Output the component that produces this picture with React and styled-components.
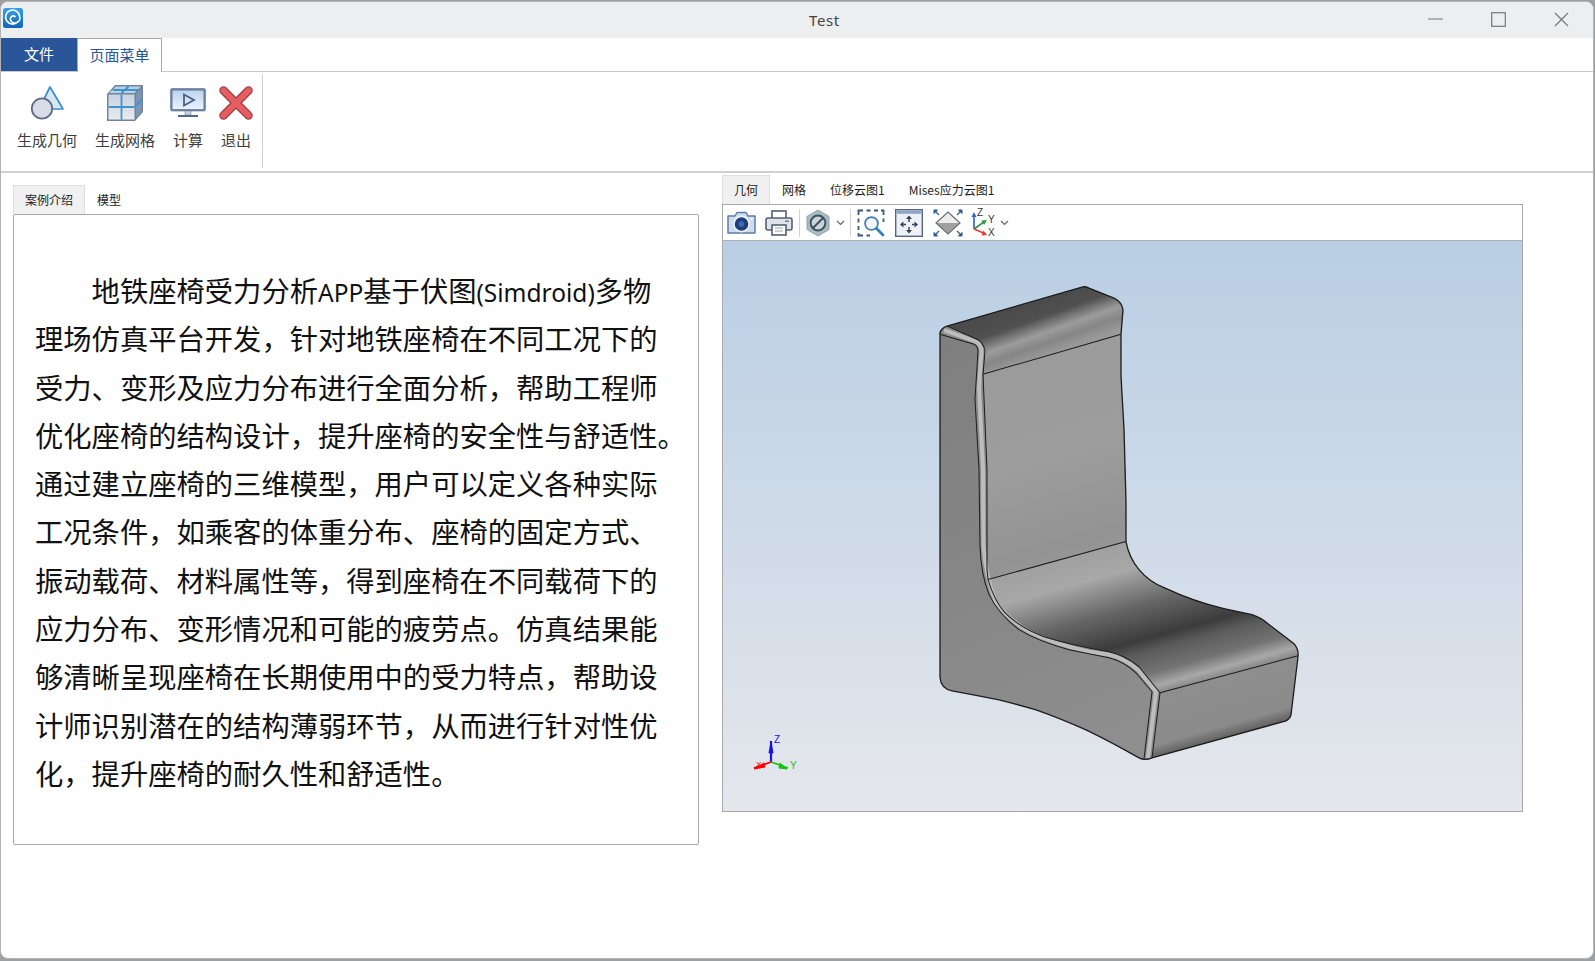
import React from "react";
import styled, { createGlobalStyle } from "styled-components";

const Global = createGlobalStyle`
  html, body { margin: 0; padding: 0; background: #9d9fa3; overflow: hidden; }
  * { box-sizing: border-box; }
  body { font-family: "Noto Sans CJK SC", "Noto Sans", sans-serif; }
`;

const Win = styled.div`
  margin: 1px 0 0 0; height: 958px; width: 1594px; background: #fff;
  border: 1px solid #b4b4b4; border-radius: 8px; overflow: hidden;
  display: flex; flex-direction: column;
`;
const TitleBar = styled.div`
  height: 36px; background: #eceef0; display: flex; align-items: center; flex: none;
`;
const AppIcon = styled.div`
  width: 36px; height: 36px; padding: 8px 0 0 2px; flex: none; margin-top: -4px;
  svg { display: block; }
`;
const Title = styled.div`
  flex: 1; text-align: center; padding-left: 208px; font-family: "Noto Sans", sans-serif;
  font-size: 15px; color: #444; letter-spacing: 0.6px; margin-top: -1px;
`;
const Ctrl = styled.div`
  width: 63px; height: 36px; display: flex; align-items: center; justify-content: center; margin-top: -2px;
`;
const TabRow = styled.div`
  height: 34px; display: flex; border-bottom: 1px solid #c9c9c9; flex: none;
`;
const FileTab = styled.div`
  width: 76px; height: 33px; background: #2a5699; color: #fff; font-size: 15px; padding-bottom: 2px;
  display: flex; align-items: center; justify-content: center;
`;
const MenuTab = styled.div`
  width: 85px; height: 34px; background: #fff; color: #2a5699; font-size: 15px; padding-bottom: 3px;
  border: 1px solid #a9a9a9; border-bottom: none;
  display: flex; align-items: center; justify-content: center;
`;
const Ribbon = styled.div`
  height: 101px; display: flex; padding: 2px 0 3px 8px; border-bottom: 2px solid #cfcfcf; flex: none;
`;
const RibbonGroup = styled.div`
  display: flex; gap: 2px; padding-right: 3px; border-right: 1px solid #d0d0d0;
`;
const RibbonBtn = styled.div`
  padding: 9px 8px 0; display: flex; flex-direction: column; align-items: center;
  font-size: 15px; color: #3d3d3d; line-height: 20px; gap: 7px;
`;
const RibbonIcon = styled.div`
  height: 40px; margin: 0 -4px; display: flex; align-items: center; justify-content: center;
  svg { display: block; }
`;
const Body = styled.div`
  flex: 1; display: flex; align-items: flex-start; padding: 2px 0 0 12px; gap: 23px;
`;
const LeftCol = styled.div`
  width: 686px; margin-top: 10px; display: flex; flex-direction: column;
`;
const RightCol = styled.div`
  width: 801px; display: flex; flex-direction: column;
`;
const TabStrip = styled.div`
  display: flex; height: 29px;
`;
const PaneTab = styled.div`
  padding: 0 11px 1px; border: 1px solid ${p => (p.$active ? "#dedede" : "transparent")};
  border-bottom: none; background: ${p => (p.$active ? "#f0f0f0" : "transparent")};
  font-size: 12px; color: #1c1c1c; display: flex; align-items: center;
  font-family: "Noto Sans CJK SC", sans-serif;
`;
const TextPanel = styled.div`
  height: 631px; border: 1px solid #a8a8a8; border-radius: 2px; background: #fff; padding: 51px 0 0 21px;
`;
const Para = styled.div`
  font-size: 28.3px; line-height: 48.3px; color: #111; font-family: "Noto Sans CJK SC", sans-serif;
`;
const Line = styled.div`
  white-space: nowrap; height: 48.3px; padding-left: ${p => (p.$indent ? "56.6px" : "0")};
`;
const Latin = styled.span`
  font-family: "Noto Sans", sans-serif; font-size: 24.5px;
`;
const Viewer = styled.div`
  border: 1px solid #a8a8a8; display: flex; flex-direction: column; height: 608px;
`;
const Toolbar = styled.div`
  height: 36px; display: flex; align-items: center; background: #fff;
  border-bottom: 1px solid #b0b0b0; flex: none;
`;
const Tool = styled.div`
  width: ${p => p.$w}px; height: 30px; display: flex; align-items: center; justify-content: center; flex: none;
  svg { display: block; flex: none; }
`;
const ToolSep = styled.div`
  width: 1px; height: 28px; background: #d4d4d4; flex: none; margin-left: ${p => p.$gap || 0}px;
`;
const Viewport = styled.div`
  flex: 1; position: relative; background: linear-gradient(#b9cee4, #e5e7ec);
`;
const Scene = styled.svg`
  position: absolute; left: 0; top: 0; width: 100%; height: 100%;
`;
const AxisMark = styled.svg`
  position: absolute; left: 28px; top: 491px;
`;

const E = "#1c1c1c";

function Chair() {
  const outline = "M941 334 Q942 329 948 327 L1083 288 Q1086 287 1090 289 L1115 299 Q1123 303 1124 311 L1122 335 L1122 377 L1125 430 L1127 503 L1127 542 Q1130 558 1140 570 Q1150 582 1165 588 Q1195 602 1225 609 L1253 615 Q1262 618 1269 624 L1295 644 Q1300 650 1299 657 L1292 715 Q1291 719 1287 721 L1153 758 Q1146 761 1140 758 Q1112 742 1087 730 Q1060 718 1037 710 Q1020 705 1000 700 Q975 695 953 691 Q942 689 941 678 Z";
  const stripOuter = "M941 335 L975 345 Q979 347 979 352 L976 400 L980 470 L981 547 Q982 575 990 595 Q1000 615 1020 630 Q1040 642 1070 650 L1110 658 Q1125 662 1137 673 L1153 692 L1145 759";
  const stripInner = "M948 327 L978 340 Q985 344 986 352 L984 375 L988 470 L988 570 L989 580 Q995 600 1005 612 Q1020 628 1045 637 Q1070 645 1110 652 Q1125 655 1140 667 L1161 693 L1153 758";
  const stripCenter = "M945 331 L976 342 Q982 345 982.5 352 L980 388 L984 470 L984.5 547 Q987 578 997 603 Q1010 621 1032 633 Q1055 644 1090 652 L1110 655 Q1125 658 1139 670 L1157 692 L1149 758";
  return (
    <Scene viewBox="724 242 799 569" preserveAspectRatio="none">
      <defs>
        <linearGradient id="side" gradientUnits="userSpaceOnUse" x1="940" y1="330" x2="1140" y2="760">
          <stop offset="0" stopColor="#7f7f7f" />
          <stop offset="0.5" stopColor="#868686" />
          <stop offset="1" stopColor="#8f8f8f" />
        </linearGradient>
        <linearGradient id="back" gradientUnits="userSpaceOnUse" x1="1040" y1="360" x2="1100" y2="570">
          <stop offset="0" stopColor="#9b9b9b" />
          <stop offset="0.45" stopColor="#9d9d9d" />
          <stop offset="0.85" stopColor="#939393" />
          <stop offset="1" stopColor="#9a9a9a" />
        </linearGradient>
        <linearGradient id="top" gradientUnits="userSpaceOnUse" x1="1011" y1="308" x2="1030" y2="362">
          <stop offset="0" stopColor="#4a4a4a" />
          <stop offset="0.35" stopColor="#505050" />
          <stop offset="0.62" stopColor="#9c9c9c" />
          <stop offset="0.8" stopColor="#868686" />
          <stop offset="1" stopColor="#999" />
        </linearGradient>
        <linearGradient id="seat" gradientUnits="userSpaceOnUse" x1="1058" y1="561" x2="1099" y2="710">
          <stop offset="0" stopColor="#a0a0a0" />
          <stop offset="0.18" stopColor="#a8a8a8" />
          <stop offset="0.42" stopColor="#666" />
          <stop offset="0.64" stopColor="#3b3b3b" />
          <stop offset="0.72" stopColor="#5a5a5a" />
          <stop offset="0.86" stopColor="#737373" />
          <stop offset="0.95" stopColor="#a8a8a8" />
          <stop offset="1" stopColor="#8a8a8a" />
        </linearGradient>
        <linearGradient id="front" gradientUnits="userSpaceOnUse" x1="1215" y1="680" x2="1232" y2="740">
          <stop offset="0" stopColor="#8e8e8e" />
          <stop offset="0.75" stopColor="#8b8b8b" />
          <stop offset="1" stopColor="#555" />
        </linearGradient>
      </defs>
      <path d={outline} fill="url(#side)" />
      <path d="M984 375 L1122 335 L1122 377 L1125 430 L1127 503 L1127 542 L989 580 L988 470 Z" fill="url(#back)" />
      <path d="M948 327 L1083 288 Q1086 287 1090 289 L1115 299 Q1123 303 1124 311 L1122 335 L984 375 L986 352 Q985 344 978 340 Z" fill="url(#top)" />
      <path d="M989 580 L1127 542 Q1130 558 1140 570 Q1150 582 1165 588 Q1195 602 1225 609 L1253 615 Q1262 618 1269 624 L1295 644 Q1300 650 1299 656 L1161 693 L1140 667 Q1125 655 1110 652 Q1070 645 1045 637 Q1020 628 1005 612 Q995 600 989 580 Z" fill="url(#seat)" />
      <path d="M1161 693 L1299 656 L1292 715 Q1291 719 1287 721 L1153 758 Z" fill="url(#front)" />
      <path d="M941 334 L948 327 L978 340 Q985 344 986 352 L984 375 L988 470 L988 570 L989 580 Q995 600 1005 612 Q1020 628 1045 637 Q1070 645 1110 652 Q1125 655 1140 667 L1161 693 L1153 758 L1145 760 L1153 692 L1137 673 Q1125 662 1110 658 L1070 650 Q1040 642 1020 630 Q1000 615 990 595 Q982 575 981 547 L980 470 L976 400 L979 352 Q979 347 975 345 Z" fill="#8c8c8c" />
      <path d={stripCenter} fill="none" stroke="#bdbdbd" strokeWidth="4" strokeLinejoin="round" />
      <path d={stripOuter} fill="none" stroke={E} strokeWidth="1" />
      <path d={stripInner} fill="none" stroke={E} strokeWidth="1" />
      <path d="M984 375 L1122 335 M989 580 L1127 542 M1161 693 L1299 656" fill="none" stroke={E} strokeWidth="1" />
      <path d={outline} fill="none" stroke={E} strokeWidth="1.3" />
    </Scene>
  );
}

const ribbon = {
  geo: (
    <svg width="36" height="36" viewBox="0 0 36 36">
      <path d="M21 2 L34 24 L10 24 Z" fill="#d6e8f6" stroke="#3a8fc7" strokeWidth="1.7" strokeLinejoin="round" />
      <circle cx="13" cy="23.5" r="10.2" fill="#d8dce6" stroke="#5f6d89" strokeWidth="1.8" />
    </svg>
  ),
  mesh: (
    <svg width="38" height="38" viewBox="0 0 38 38">
      <defs>
        <linearGradient id="mf" x1="0" y1="0" x2="0" y2="1">
          <stop offset="0" stopColor="#c6d3e0" />
          <stop offset="1" stopColor="#e9eaee" />
        </linearGradient>
      </defs>
      <path d="M1 10 L9 1 H37 V28 L29 37 H1 Z" fill="#71839d" />
      <path d="M2.5 10.5 H28.5 V35.5 H2.5 Z" fill="url(#mf)" />
      <path d="M3 9 L10 2.5 H35 L28.5 9 Z" fill="#b9d2e8" />
      <path d="M30 10 L35.5 4 V27.5 L30 34 Z" fill="#7e95b4" />
      <path d="M2.5 23 H28.5 M15.5 10.5 V35.5 M15.5 9 L22.5 2.5 M7 6 H32 M30 22 L35.5 15.5" stroke="#3f93cf" strokeWidth="1.8" fill="none" />
    </svg>
  ),
  calc: (
    <svg width="36" height="30" viewBox="0 0 36 30">
      <defs>
        <linearGradient id="ms" x1="0" y1="0" x2="0" y2="1">
          <stop offset="0" stopColor="#bdd4ee" />
          <stop offset="1" stopColor="#eaf2fb" />
        </linearGradient>
      </defs>
      <rect x="0.8" y="0.8" width="34.4" height="22" rx="1" fill="#7388a8" stroke="#5b6f90" />
      <rect x="2.6" y="2.6" width="30.8" height="18.4" fill="url(#ms)" />
      <path d="M14 6.5 L24 12 L14 17.5 Z" fill="none" stroke="#4c6187" strokeWidth="1.8" />
      <rect x="15" y="23" width="6" height="4" fill="#c7d2e0" stroke="#7c8ba3" strokeWidth="0.6" />
      <rect x="8" y="27" width="20" height="2" fill="#53678a" />
    </svg>
  ),
  exit: (
    <svg width="36" height="36" viewBox="0 0 36 36">
      <path d="M5.5 5.5 L30.5 30.5 M30.5 5.5 L5.5 30.5" stroke="#a93c40" strokeWidth="8.5" strokeLinecap="round" />
      <path d="M5.5 5.5 L30.5 30.5 M30.5 5.5 L5.5 30.5" stroke="#e35f62" strokeWidth="6" strokeLinecap="round" />
    </svg>
  ),
};

const Chevron = () => (
  <svg width="9" height="6" viewBox="0 0 9 6"><path d="M1 1 L4.5 4.5 L8 1" fill="none" stroke="#666" strokeWidth="1.2" /></svg>
);

const lines = [
  <>地铁座椅受力分析<Latin>APP</Latin>基于伏图<Latin>(Simdroid)</Latin>多物</>,
  "理场仿真平台开发，针对地铁座椅在不同工况下的",
  "受力、变形及应力分布进行全面分析，帮助工程师",
  "优化座椅的结构设计，提升座椅的安全性与舒适性。",
  "通过建立座椅的三维模型，用户可以定义各种实际",
  "工况条件，如乘客的体重分布、座椅的固定方式、",
  "振动载荷、材料属性等，得到座椅在不同载荷下的",
  "应力分布、变形情况和可能的疲劳点。仿真结果能",
  "够清晰呈现座椅在长期使用中的受力特点，帮助设",
  "计师识别潜在的结构薄弱环节，从而进行针对性优",
  "化，提升座椅的耐久性和舒适性。",
];

export default function App() {
  return (
    <>
      <Global />
      <Win>
        <TitleBar>
          <AppIcon>
            <svg width="20" height="20" viewBox="0 0 20 20">
              <defs>
                <linearGradient id="ai" x1="0" y1="0" x2="0" y2="1">
                  <stop offset="0" stopColor="#35a3e6" />
                  <stop offset="1" stopColor="#1163b5" />
                </linearGradient>
              </defs>
              <rect width="20" height="20" rx="2.5" fill="url(#ai)" />
              <path d="M14.5 14 A7 7 0 1 1 16.5 8 A4.8 4.8 0 0 1 7.5 12 A3 3 0 0 1 12 8.5" fill="none" stroke="#fff" strokeWidth="1.7" strokeLinecap="round" />
            </svg>
          </AppIcon>
          <Title>Test</Title>
          <Ctrl>
            <svg width="15" height="15" viewBox="0 0 15 15"><path d="M0 7 H15" stroke="#777" strokeWidth="1.2" /></svg>
          </Ctrl>
          <Ctrl>
            <svg width="15" height="15" viewBox="0 0 15 15"><rect x="0.7" y="0.7" width="13.6" height="13.6" fill="none" stroke="#777" strokeWidth="1.2" /></svg>
          </Ctrl>
          <Ctrl>
            <svg width="15" height="15" viewBox="0 0 15 15"><path d="M1 1 L14 14 M14 1 L1 14" stroke="#777" strokeWidth="1.2" /></svg>
          </Ctrl>
        </TitleBar>
        <TabRow>
          <FileTab>文件</FileTab>
          <MenuTab>页面菜单</MenuTab>
        </TabRow>
        <Ribbon>
          <RibbonGroup>
            <RibbonBtn><RibbonIcon>{ribbon.geo}</RibbonIcon>生成几何</RibbonBtn>
            <RibbonBtn><RibbonIcon>{ribbon.mesh}</RibbonIcon>生成网格</RibbonBtn>
            <RibbonBtn><RibbonIcon>{ribbon.calc}</RibbonIcon>计算</RibbonBtn>
            <RibbonBtn><RibbonIcon>{ribbon.exit}</RibbonIcon>退出</RibbonBtn>
          </RibbonGroup>
        </Ribbon>
        <Body>
          <LeftCol>
            <TabStrip>
              <PaneTab $active>案例介绍</PaneTab>
              <PaneTab>模型</PaneTab>
            </TabStrip>
            <TextPanel>
              <Para>
                {lines.map((l, i) => <Line key={i} $indent={i === 0}>{l}</Line>)}
              </Para>
            </TextPanel>
          </LeftCol>
          <RightCol>
            <TabStrip>
              <PaneTab $active>几何</PaneTab>
              <PaneTab>网格</PaneTab>
              <PaneTab>位移云图1</PaneTab>
              <PaneTab>Mises应力云图1</PaneTab>
            </TabStrip>
            <Viewer>
              <Toolbar>
                <Tool $w={36}>
                  <svg width="29" height="23" viewBox="0 0 29 23">
                    <path d="M1 5 H8 L10 1.5 H19 L21 5 H28 V22 H1 Z" fill="#cddcee" stroke="#5f7ba6" strokeWidth="1.5" strokeLinejoin="round" />
                    <circle cx="14.5" cy="13" r="7.6" fill="#1f3f7c" stroke="#eef3f9" strokeWidth="1.6" />
                    <circle cx="14.5" cy="13" r="2.8" fill="#3f6cb5" />
                    <circle cx="24.5" cy="8" r="1" fill="#fff" />
                  </svg>
                </Tool>
                <Tool $w={40}>
                  <svg width="28" height="26" viewBox="0 0 28 26">
                    <rect x="7" y="1" width="14" height="8" fill="#fff" stroke="#566070" strokeWidth="1.6" />
                    <rect x="1" y="8" width="26" height="12" rx="2" fill="#dfe4ea" stroke="#566070" strokeWidth="1.6" />
                    <rect x="7" y="15" width="14" height="10" fill="#fff" stroke="#566070" strokeWidth="1.6" />
                    <path d="M10 18 H18 M10 21 H18" stroke="#9aa3ae" />
                    <rect x="20" y="10.5" width="4" height="1.5" fill="#7a8694" />
                  </svg>
                </Tool>
                <ToolSep />
                <Tool $w={36}>
                  <svg width="24" height="28" viewBox="0 0 24 28">
                    <path d="M12 1 L23 7.5 V20.5 L12 27 L1 20.5 V7.5 Z" fill="#a9bcc2" stroke="#8fa3aa" />
                    <circle cx="12" cy="14" r="7.4" fill="#c9d5d9" stroke="#3f5060" strokeWidth="2" />
                    <path d="M7 19 L17 9" stroke="#3f5060" strokeWidth="2" />
                  </svg>
                </Tool>
                <Tool $w={8}><Chevron /></Tool>
                <ToolSep $gap={6} />
                <Tool $w={40}>
                  <svg width="28" height="28" viewBox="0 0 28 28">
                    <path d="M1.5 6 V1.5 H6 M9.5 1.5 H13.5 M17 1.5 H21 M24 1.5 H26.5 V6 M26.5 9.5 V13 M1.5 9.5 V13.5 M1.5 17 V21 M1.5 24 V26.5 H6 M9.5 26.5 H13" fill="none" stroke="#3f5478" strokeWidth="1.8" />
                    <circle cx="14.5" cy="14.5" r="6.4" fill="#f3f7fb" stroke="#4a7fb0" strokeWidth="1.8" />
                    <path d="M19.5 19.5 L26 26" stroke="#2f7fc0" strokeWidth="2.8" strokeLinecap="round" />
                  </svg>
                </Tool>
                <Tool $w={36}>
                  <svg width="28" height="28" viewBox="0 0 28 28">
                    <rect x="0.7" y="0.7" width="26.6" height="26.6" fill="#eef1f6" stroke="#55688b" strokeWidth="1.4" />
                    <rect x="1.4" y="1.4" width="25.2" height="3.4" fill="#8fa6c6" />
                    <path d="M14 10 V13 M14 18 V21 M8.5 15.5 H11 M17 15.5 H19.5" stroke="#2e3e5c" strokeWidth="1.4" />
                    <path d="M14 6.5 L11 10 H17 Z M14 24.5 L11 21 H17 Z M5 15.5 L8.5 12.5 V18.5 Z M23 15.5 L19.5 12.5 V18.5 Z" fill="#2e3e5c" />
                  </svg>
                </Tool>
                <Tool $w={42}>
                  <svg width="30" height="28" viewBox="0 0 30 28">
                    <path d="M15 3 L27 14 L15 25 L3 14 Z" fill="#a0a0a0" />
                    <path d="M15 3 L27 14 H3 Z" fill="#ececec" />
                    <path d="M15 3 L27 14 L15 25 L3 14 Z" fill="none" stroke="#6f6f6f" strokeWidth="1.2" />
                    <path d="M1 1 L4.5 1 L1 4.5 Z M29 1 L25.5 1 L29 4.5 Z M1 27 L4.5 27 L1 23.5 Z M29 27 L25.5 27 L29 23.5 Z" fill="#2f5b93" stroke="#2f5b93" strokeLinejoin="round" />
                    <path d="M2 2 L6 6 M28 2 L24 6 M2 26 L6 22 M28 26 L24 22" stroke="#2f5b93" strokeWidth="1.3" />
                  </svg>
                </Tool>
                <Tool $w={31}>
                  <svg width="29" height="30" viewBox="0 0 29 30">
                    <path d="M4 21 V7" stroke="#2f6cc0" strokeWidth="1.7" />
                    <path d="M4 4 L1.5 9 H6.5 Z" fill="#2f6cc0" />
                    <path d="M4 21 L14 14" stroke="#2e9a4a" strokeWidth="1.7" />
                    <path d="M17 12 L11.5 12.5 L14 17 Z" fill="#2e9a4a" />
                    <path d="M4 21 L13.5 25" stroke="#e0393e" strokeWidth="1.7" />
                    <path d="M17 27 L11.5 27.5 L13.5 22.5 Z" fill="#e0393e" />
                    <text x="7" y="8" fontSize="10" fontFamily="Liberation Sans" fill="#333">Z</text>
                    <text x="18" y="15" fontSize="10" fontFamily="Liberation Sans" fill="#333">Y</text>
                    <text x="18" y="28" fontSize="10" fontFamily="Liberation Sans" fill="#333">X</text>
                  </svg>
                </Tool>
                <Tool $w={8}><Chevron /></Tool>
              </Toolbar>
              <Viewport>
                <Chair />
                <AxisMark width="50" height="45" viewBox="0 0 50 45">
                  <path d="M20 30 V9" stroke="#1515e0" strokeWidth="2.2" />
                  <path d="M20 10 L18 21 H22 Z" fill="#1515e0" stroke="#1515e0" />
                  <path d="M20 30 L3 36" stroke="#f00" strokeWidth="1.8" />
                  <path d="M3 37 L13 31 L14 35 Z" fill="#f00" stroke="#f00" />
                  <path d="M20 30 L37 36" stroke="#12c412" strokeWidth="1.8" />
                  <path d="M36 37 L29 31 L28 36 Z" fill="#12c412" stroke="#12c412" />
                  <text x="23" y="11" fontSize="10" fontFamily="Liberation Sans" fill="#1515e0">Z</text>
                  <text x="5" y="35" fontSize="8" fontFamily="Liberation Sans" fill="#f00">X</text>
                  <text x="39" y="37" fontSize="10" fontFamily="Liberation Sans" fill="#12c412">Y</text>
                </AxisMark>
              </Viewport>
            </Viewer>
          </RightCol>
        </Body>
      </Win>
    </>
  );
}
